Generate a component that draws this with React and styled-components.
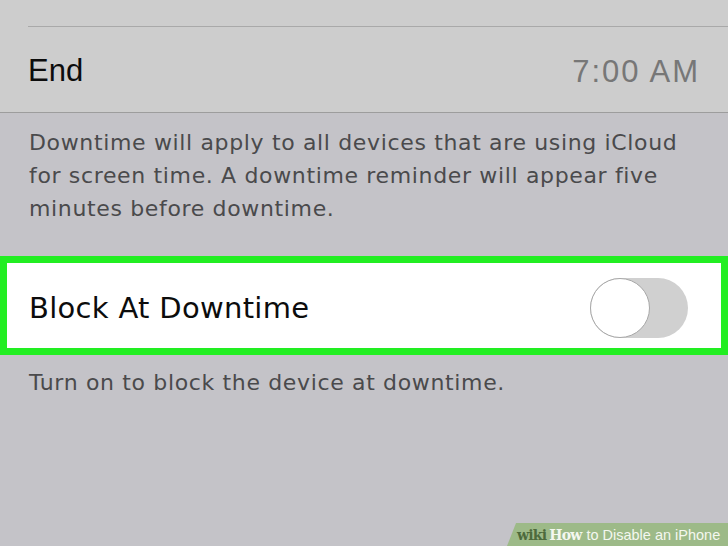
import React from 'react';
import styled, { createGlobalStyle } from 'styled-components';

const GlobalStyle = createGlobalStyle`
  html, body {
    margin: 0;
    padding: 0;
    background: #c4c3c8;
  }
  #root {
    width: 728px;
    height: 546px;
    overflow: hidden;
  }
`;

const Page = styled.div`
  position: relative;
  width: 728px;
  height: 546px;
  background: #c4c3c8;
  font-family: "Liberation Sans", Arial, sans-serif;
`;

const TopGroup = styled.div`
  background: #cdcdcd;
  padding-top: 26px;
  border-bottom: 1px solid #9d9d9d;
`;

const Row = styled.div`
  display: flex;
  align-items: center;
  justify-content: space-between;
  height: 85px;
  margin-left: 28px;
  padding-right: 28px;
  border-top: 1px solid #a9a9a9;
`;

const Label = styled.span`
  font-family: ${p => p.wide ? '"DejaVu Sans", sans-serif' : '"Liberation Sans", Arial, sans-serif'};
  font-size: ${p => p.size || 30}px;
  color: #0c0c0c;
  letter-spacing: ${p => p.spacing || 0}px;
  margin-top: ${p => p.offset || 0}px;
`;

const Value = styled.span`
  font-size: 31px;
  color: #777777;
  letter-spacing: 2px;
  margin-top: 4px;
`;

const Note = styled.p`
  margin: ${p => p.top}px 0 0;
  padding: 0 29px;
  font-family: "DejaVu Sans", sans-serif;
  font-size: 22px;
  line-height: 33px;
  letter-spacing: 0.65px;
  color: #4a4a4c;
`;

const Highlight = styled.div`
  margin-top: 31px;
  height: 85px;
  background: #ffffff;
  border: 7px solid #22ee22;
  display: flex;
  align-items: center;
  justify-content: space-between;
  padding: 0 33px 0 22px;
`;

const Toggle = styled.div`
  position: relative;
  width: 98px;
  height: 60px;
  border-radius: 30px;
  background: #d0d0d0;
  margin-top: 4px;
`;

const Knob = styled.div`
  position: absolute;
  left: 0;
  top: 0;
  width: 58px;
  height: 58px;
  border-radius: 50%;
  background: #ffffff;
  border: 1px solid #a8a8a8;
`;

const Banner = styled.div`
  position: absolute;
  right: 0;
  bottom: 0;
  width: 221px;
  height: 23px;
  background: #9dba88;
  clip-path: polygon(9px 0, 100% 0, 100% 100%, 0 100%);
  display: flex;
  align-items: center;
  padding-left: 10px;
  box-sizing: border-box;
  font-size: 14.5px;
  color: #f4f7ef;
  white-space: nowrap;
`;

const Wiki = styled.span`
  font-family: "DejaVu Serif", "Liberation Serif", serif;
  font-weight: bold;
  font-size: 14px;
  color: ${p => p.dark ? '#4d6a3c' : '#f4f7ef'};
  letter-spacing: -0.8px;
  margin-right: ${p => p.gap || 0}px;
`;

export default function App() {
  return (
    <Page>
      <GlobalStyle />
      <TopGroup>
        <Row>
          <Label offset={3} size={31}>End</Label>
          <Value>7:00 AM</Value>
        </Row>
      </TopGroup>
      <Note top={13}>
        Downtime will apply to all devices that are using iCloud for screen time. A downtime reminder will appear five minutes before downtime.
      </Note>
      <Highlight>
        <Label wide size={29} spacing={0.3} offset={4}>Block At Downtime</Label>
        <Toggle>
          <Knob />
        </Toggle>
      </Highlight>
      <Note top={11}>Turn on to block the device at downtime.</Note>
      <Banner>
        <Wiki dark gap={3}>wiki</Wiki>
        <Wiki gap={5}>How</Wiki>
        to Disable an iPhone
      </Banner>
    </Page>
  );
}
